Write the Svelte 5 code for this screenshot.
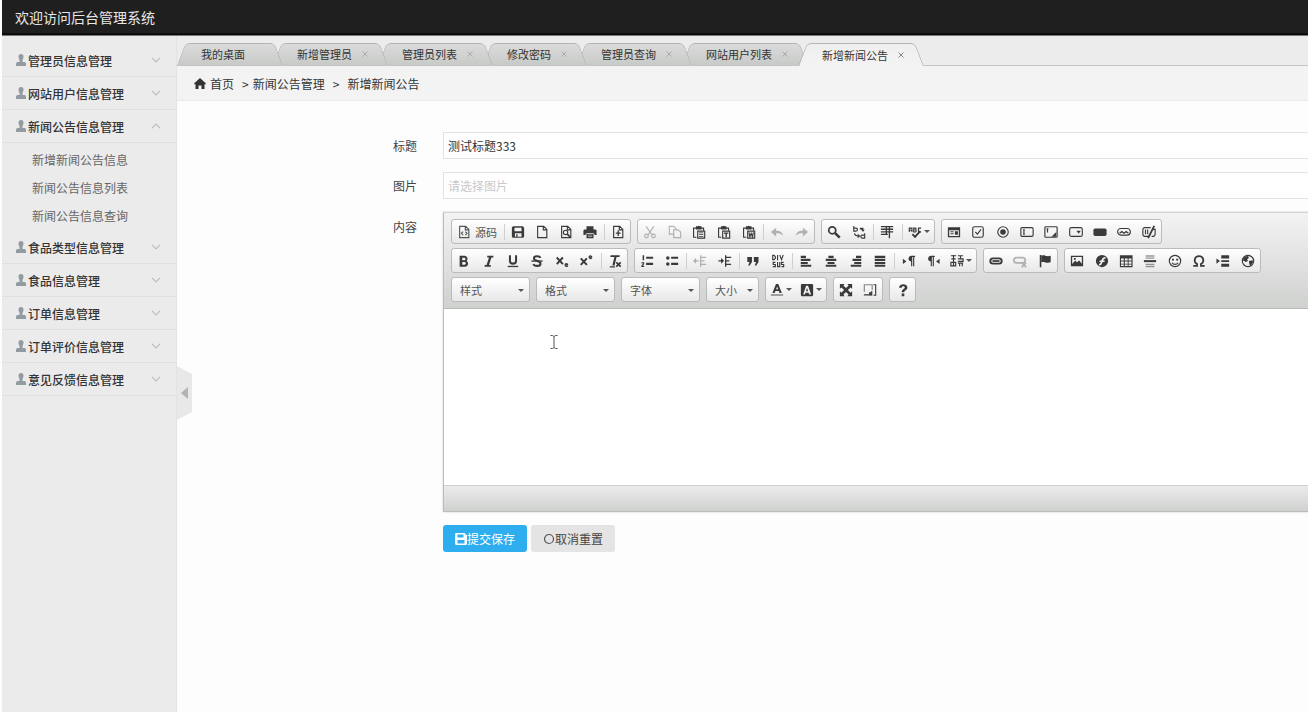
<script lang="ts">
  let menus = $state([
    { name: '管理员信息管理', open: false, items: [] as string[] },
    { name: '网站用户信息管理', open: false, items: [] as string[] },
    { name: '新闻公告信息管理', open: true, items: ['新增新闻公告信息', '新闻公告信息列表', '新闻公告信息查询'] },
    { name: '食品类型信息管理', open: false, items: [] as string[] },
    { name: '食品信息管理', open: false, items: [] as string[] },
    { name: '订单信息管理', open: false, items: [] as string[] },
    { name: '订单评价信息管理', open: false, items: [] as string[] },
    { name: '意见反馈信息管理', open: false, items: [] as string[] }
  ]);

  const tabs = ['我的桌面', '新增管理员', '管理员列表', '修改密码', '管理员查询', '网站用户列表', '新增新闻公告'];
  let active = $state(6);
  let title = $state('测试标题333');
  let picture = $state('');
  let content = $state('');

  const page = '<path class="l" d="M3 1.5h7l3.5 3.5v9.5H3zM9.5 1.5v4h4"/>';
  const clip = '<path class="l" stroke-width="1.6" d="M5 14H1.8V3.5h11.4v3"/><path d="M4.5 1.5h2a1.4 1.4 0 0 1 2.400 0h2v3.500h-6.400z"/><path class="l" d="M6.500 7h8v8h-8z"/>';
  const pilcrow = '<path d="M11 2h4v1.500h-1V14h-1.300V3.500h-1V14h-1.300V8.500a3.200 3.200 0 0 1 .6-6.500z"/>';

  const icons: Record<string, string> = {
    源码: page + '<path class="l" d="M7 7.500 5 9.500l2 2M9.500 7.500l2 2-2 2"/>',
    保存: '<path fill-rule="evenodd" d="M2.500 1.500h11l1.500 1.500v10.500l-1 1h-12l-1-1v-11zM4 3v4h8V3zM4.500 9.500v4H6v-3h1.500v3H12v-4z"/>',
    新建: page,
    预览: page + '<circle class="l" cx="7.500" cy="8.500" r="2.500"/><path class="l" stroke-width="2" d="m9.500 10.500 3.500 3.500"/>',
    打印: '<path fill-rule="evenodd" d="M4 1.500h8V5H4zM1.500 5h13l1 1v5.500H13V10H3v1.500H.5V6zM4 9h8v6H4zM5.500 11v.8h5V11zM5.500 13v.8h5V13z"/>',
    模板: page + '<path d="M7.500 6h1.500v2.500h2V10H9v2.500H7.500V10h-2V8.500h2z"/>',
    剪切: '<path class="l" stroke-width="1.700" d="m3.500 1.500 7 10M12.500 1.500l-7 10"/><circle class="l" cx="4" cy="12.500" r="2"/><circle class="l" cx="12" cy="12.500" r="2"/>',
    复制: '<path class="l" d="M1.500 1.500h5L9 4v6.500H1.500z"/><path fill="#f4f4f4" stroke="currentColor" stroke-width="1.300" d="M6.500 5.500h5L14.500 8v6.500h-8z"/>',
    粘贴: clip + '<path d="M8 8.500h5v1H8zM8 10.500h5v1H8zM8 12.500h5v1H8z"/>',
    粘贴为文本: clip + '<path d="M8 8.500h5V10h-1.700v4H9.700v-4H8z"/>',
    从Word粘贴: clip + '<path class="l" d="m8 8.500 1 5 1.500-4 1.500 4 1-5"/>',
    撤销: '<path d="M7 3v3.500c5 0 7.500 2 8 6-2-2.500-4-3-8-3V13L1 8z"/>',
    重做: '<path d="M9 3v3.500c-5 0-7.500 2-8 6 2-2.500 4-3 8-3V13l6-5z"/>',
    查找: '<circle class="l" stroke-width="2" cx="6" cy="6" r="4"/><path class="l" stroke-width="3" d="m9 9 5.500 5.500"/>',
    替换: '<path class="l" stroke-width="1.600" d="M2 1v6h2.500a1.500 1.500 0 0 0 0-3.500H2M14.500 9.500V15h-2.700a1.600 1.600 0 0 1 0-3.500h2.700M3 9.500c0 2 1.500 3 4.500 3"/><path d="m6.500 10 3 2.500-3 2.500zM9 3h4v2h1.500L12.500 8l-2-3H9z"/>',
    全选: '<path d="M1 1h14v1.600H1zM1 4h14v1.600H1zM1 7h14v1.600H1zM1 10h8v1.500H1zM10 1h1.500v14H10zM6.500 2H8v9H6.500z"/>',
    拼写检查: '<path class="l" d="M1.500 8V3.500h3V8m-3-2h3M6.500 3.500V8h2a1.200 1.200 0 0 0 0-2.300 1.200 1.200 0 0 0 0-2.200zM15 3.500h-3V8h3"/><path class="l" stroke-width="2.200" d="m5 10.500 3 3L14 7"/>',
    表单: '<path fill-rule="evenodd" d="M1 2.500h14v11.500H1zM2.500 6v6.500h11V6zM4 7h3.500v1.200H4zM4 9.500h3.500v1.200H4zM9 7h3.500v4H9z"/>',
    复选框: '<rect class="l" x="2" y="2" width="12" height="12" rx="2"/><path class="l" stroke-width="1.800" d="m5 8 2.300 2.500L11.500 5"/>',
    单选框: '<circle class="l" cx="8" cy="8" r="6"/><circle cx="8" cy="8" r="3.200"/>',
    单行文本: '<rect class="l" x="1" y="3" width="14" height="10" rx="1.500"/><path class="l" d="M4.500 5.500v5M3.500 5.500h2M3.500 10.500h2"/>',
    多行文本: '<rect class="l" x="1" y="2" width="14" height="12" rx="1"/><path class="l" d="M4 4.500v4M3 4.500h2"/><path d="M14 8v5.500H8.500z"/>',
    列表菜单: '<rect class="l" x=".8" y="3" width="14.400" height="10" rx="2"/><path d="M8.500 6.500h5l-2.500 3.500z"/>',
    按钮: '<rect x=".5" y="4" width="15" height="8.500" rx="2"/>',
    图像按钮: '<rect class="l" x=".8" y="4" width="14.400" height="7.500" rx="3.500"/><path class="l" d="m3 9.500 2.500-2 2.500 2 2.500-2 2.500 2"/>',
    隐藏域: '<path class="l" d="M8 13H2.500L1 11.500v-7L2.500 3H10M12 5h3v6l-1.500 2H11M4 5v5.500M6.500 5v5.500"/><path class="l" stroke-width="2" d="M14 1 7 15"/>',
    加粗: '<path fill-rule="evenodd" d="M3 2h6a3.500 3.500 0 0 1 2 6 3.500 3.500 0 0 1-1.500 6.500H3zm3 2.200V7h2.300a1.400 1.400 0 0 0 0-2.800zM6 9v3.200h2.500a1.600 1.600 0 0 0 0-3.200z"/>',
    倾斜: '<path d="M6 2h7v2h-2.200L8 12.500h2v2H3v-2h2.200L8 4H6z"/>',
    下划线: '<path class="l" stroke-width="2.300" d="M4.500 1.500V8c0 4 7 4 7 0V1.500"/><path d="M2 13.500h12V15H2z"/>',
    删除线: '<path class="l" stroke-width="2.300" d="M12 4.500C11 2 4.500 2 4.500 5c0 3.500 7.500 2 7.500 6 0 3.500-7 3.200-8.200.5"/><path d="M1.500 7.300h13v1.500h-13z"/>',
    下标: '<path class="l" stroke-width="2.200" d="m2 4 7 7.500M9 4l-7 7.500"/><path class="l" d="M11.500 12.500h3c0-2-3-2-3 0s2 2.200 3 1.200"/>',
    上标: '<path class="l" stroke-width="2.200" d="m2 5 7 7.500M9 5l-7 7.500"/><path class="l" d="M11.500 3.500h3c0-2-3-2-3 0s2 2.200 3 1.200"/>',
    清除格式: '<path d="M3 1.500h10.500l-.4 2H9.800L7.500 13H5l2.300-9.500H2.600zM2 14h6v1.300H2z"/><path class="l" stroke-width="2" d="m9.500 9.500 5 5M14.500 9.500l-5 5"/>',
    编号列表: '<path d="M7 3h8v2.500H7zM7 10h8v2.500H7zM3 1.500h1.700V7H3zM1.500 9.500h3.300v2.200L3 13.500h1.800v1.300H1.500v-1.500l1.700-2v-.6H1.500z"/>',
    项目列表: '<circle cx="3.200" cy="4.500" r="2"/><circle cx="3.200" cy="11.500" r="2"/><path d="M7 3h8v2.500H7zM7 10h8v2.500H7z"/>',
    减少缩进: '<path d="M8 1.500h1.500v13H8zM9 3h6v1.500H9zM9 7h4v1.500H9zM9 11h6v1.500H9zM6.500 7v1.500h-3V11L0 7.800 3.500 4.500V7z"/>',
    增加缩进: '<path d="M8 1.500h1.500v13H8zM9 3h6v1.500H9zM9 7h4v1.500H9zM9 11h6v1.500H9zM.5 7v1.500h3V11L7 7.800 3.500 4.500V7z"/>',
    块引用: '<path d="M1.500 3.500h5.300V9L4.300 13H2.500L4 9H1.500zM9 3.500h5.300V9l-2.500 4H10l1.500-4H9z"/>',
    DIV容器: '<path class="l" stroke-width="1.500" d="M2 1.500v5h1.500L5 5V3L3.500 1.500zM7.500 1v6M10 1l2 5.500L14 1M5 9.500H2.500V12H5v2.500H2M7.500 9v5.500H10V9M14.500 9.500H12V12h2.500v2.500H12"/>',
    左对齐: '<path d="M2 2h6v2.500H2zM2 5.500h11V8H2zM2 9h8v2.300H2zM2 12.300h12v2.200H2z"/>',
    居中: '<path d="M5 2h6v2.500H5zM2 5.500h12V8H2zM4 9h8v2.300H4zM2 12.300h12v2.200H2z"/>',
    右对齐: '<path d="M8 2h6v2.500H8zM4 5.500h10V8H4zM6 9h8v2.300H6zM2 12.300h12v2.200H2z"/>',
    两端对齐: '<path d="M2 2h12v2.500H2zM2 5.500h12V8H2zM2 9h12v2.300H2zM2 12.300h12v2.200H2z"/>',
    从左到右: pilcrow + '<path d="m1 5.500 4 3-4 3z"/>',
    从右到左: '<g transform="translate(-5)">' + pilcrow + '</g><path d="m15.500 5.500-4 3 4 3z"/>',
    语言: '<path class="l" stroke-width="1.500" d="M1 2h6M4 1v13M1.500 5.500h5M1 9.500h5.500v4H1zM9 2h6M12 2v3.500M9 5.500h6v3H9M9 10.500h6M11 10v4M14 10v4"/>',
    链接: '<rect class="l" stroke-width="2.200" x="1.500" y="5" width="13" height="6" rx="3"/><path d="M4 7h8v2H4z"/>',
    取消链接: '<rect class="l" stroke-width="2" x="1" y="4" width="13" height="6" rx="3"/><path class="l" stroke-width="2" d="m10 10 5 5M15 10l-5 5"/>',
    锚点: '<path d="M2 1h1.800v14H2zM4 2c3-1.500 5 1.500 10.500 0v7.500C9 11 7 8 4 9.500z"/>',
    图像: '<path fill-rule="evenodd" d="M1 2h14v12H1zM2.500 3.500v8l3.500-4 2 2 2.500-2 3 3.500v-7.500zM4.500 4.500h2v2h-2z"/>',
    Flash: '<path fill-rule="evenodd" d="M8 1a7 7 0 1 1 0 14A7 7 0 0 1 8 1zm4 2.500c-3 0-4 1.500-4.700 4H5.500l-.6 1.500h1.900c-.6 1.500-1 2-2.300 2v2c3 0 3.500-2 4.200-4h2l.5-1.500H9.300c.5-1.400 1.200-2 2.700-2z"/>',
    表格: '<path fill-rule="evenodd" d="M1 1.500h14.500v13.500H1zM2.300 5v2.500h3.200V5zM6.700 5v2.500h3.200V5zM11 5v2.500h3.200V5zM2.300 8.600V11h3.200V8.600zM6.700 8.600V11h3.200V8.600zM11 8.600V11h3.200V8.600zM2.300 12v1.700h3.200V12zM6.700 12v1.700h3.200V12zM11 12v1.700h3.200V12z"/>',
    水平线: '<path d="M1 7h14v2.300H1z"/><path opacity=".5" d="M3 1.500h10V3H3zM3 4h10v1.500H3zM3 11h10v1.500H3zM3 13.500h10V15H3z"/>',
    表情: '<circle class="l" cx="8" cy="8" r="6.500"/><path d="M4.500 5.500h2.300v2H4.500zM9.300 5.500h2.300v2H9.300z"/><path class="l" d="M4.500 10c1.500 2.500 5.500 2.500 7 0"/>',
    特殊符号: '<path class="l" stroke-width="2" d="M1.500 13.500h4.300v-2C1 8.500 3 2.500 8 2.500s7 6 2.200 9v2h4.300"/>',
    分页符: '<path d="M6 1.500h9v3.500H6zM6 7.200h9V9H6zM6 11h9v3.500H6zM.5 5 4.500 8l-4 3z"/>',
    IFrame: '<circle class="l" cx="8" cy="8" r="6.500"/><path d="M3.500 4 8 2l1 2.500L7 6l1 2-2.500 1L2 7zM9 8l4-1 1 2-3.500 5-1-2.500z"/>',
    文本颜色: '<path fill-rule="evenodd" d="M6.800 1h2.700l4 10.500h-2.600L10 9.200H6.200l-.9 2.300H2.800zm1.300 3L7 7.200h2.300z"/><path opacity=".5" d="M1 12.700h14v2H1z"/>',
    背景颜色: '<path fill-rule="evenodd" d="M2 1h12l1 1v12l-1 1H2l-1-1V2zm5 2L3.600 13h2L6.300 11h3.500l.7 2h2.200L9.200 3zm1 2.500L9.200 9.300H6.900z"/>',
    全屏: '<path d="M1 1h5.500L5 2.800l3 3 3-3L9.500 1H15v5.500L13.200 5l-3 3 3 3L15 9.500V15H9.500l1.500-1.800-3-3-3 3L6.500 15H1V9.500L2.800 11l3-3-3-3L1 6.500z"/>',
    显示区块: '<path class="l" opacity=".6" d="M1.500 10V2h9v6"/><path class="l" stroke-width="1.500" d="M1 13.500h9V9M12 2h2.500v12H12"/><path d="M7 10.500h3V14H7z"/>',
    关于: '<path d="M3.500 5.500C3.500-.3 13 .3 13 5c0 3-3.600 3.200-3.600 5.500H6.600c0-3.500 3.400-3.700 3.400-5.300 0-2-3.500-2-3.500.3zM6.500 12h3v3h-3z"/>'
  };

  type Group = { w: number; names: string[]; combo?: boolean };
  const rows: Group[][] = [
    [
      { w: 180, names: ['源码', '|', '保存', '新建', '预览', '打印', '|', '模板'] },
      { w: 178, names: ['剪切', '复制', '粘贴', '粘贴为文本', '从Word粘贴', '|', '撤销', '重做'] },
      { w: 114, names: ['查找', '替换', '|', '全选', '|', '拼写检查'] },
      { w: 221, names: ['表单', '复选框', '单选框', '单行文本', '多行文本', '列表菜单', '按钮', '图像按钮', '隐藏域'] }
    ],
    [
      { w: 177, names: ['加粗', '倾斜', '下划线', '删除线', '下标', '上标', '|', '清除格式'] },
      { w: 343, names: ['编号列表', '项目列表', '|', '减少缩进', '增加缩进', '|', '块引用', 'DIV容器', '|', '左对齐', '居中', '右对齐', '两端对齐', '|', '从左到右', '从右到左', '语言'] },
      { w: 75, names: ['链接', '取消链接', '锚点'] },
      { w: 197, names: ['图像', 'Flash', '表格', '水平线', '表情', '特殊符号', '分页符', 'IFrame'] }
    ],
    [
      { w: 79, names: ['样式'], combo: true },
      { w: 79, names: ['格式'], combo: true },
      { w: 79, names: ['字体'], combo: true },
      { w: 53, names: ['大小'], combo: true },
      { w: 62, names: ['文本颜色', '背景颜色'] },
      { w: 50, names: ['全屏', '显示区块'] },
      { w: 27, names: ['关于'] }
    ]
  ];
  const faded = ['剪切', '复制', '撤销', '重做', '减少缩进', '取消链接'];
  const withCaret = ['拼写检查', '语言', '文本颜色', '背景颜色'];
</script>

<div class="app">
  <header>欢迎访问后台管理系统</header>
  <div class="body">
    <aside>
      <nav>
        {#each menus as menu}
          <button class="menu" aria-expanded={menu.open} onclick={() => (menu.open = !menu.open)}>
            <svg class="user" viewBox="0 0 10 12"><path d="M5 0a2.500 2.500 0 0 1 2.500 2.500C7.500 4.500 6.800 5 6.500 6v2H9l1 1.500V12H0V9.500L1 8h2.500V6C3.200 5 2.500 4.500 2.500 2.500A2.500 2.500 0 0 1 5 0z" /></svg>
            <span>{menu.name}</span>
            <svg class="chev" class:up={menu.open} viewBox="0 0 10 6"><path d="m1 .8 4 4 4-4" /></svg>
          </button>
          {#if menu.open && menu.items.length}
            <ul>
              {#each menu.items as item}<li><a href="#list">{item}</a></li>{/each}
            </ul>
          {/if}
        {/each}
      </nav>
      <button class="fold" aria-label="收起菜单">
        <svg viewBox="0 0 15 54"><path class="plate" d="M0 0 15 8v38L0 54z" /><path class="arrow" d="M11 21v12l-7-6z" /></svg>
      </button>
    </aside>

    <main>
      <div class="tabs">
        {#each tabs as tab, i}
          <div class="tab" class:active={active === i} class:home={i === 0} style:z-index={active === i ? 20 : 10 - i}>
            <button class="name" onclick={() => (active = i)}>{tab}</button>
            {#if i > 0}
              <button class="close" aria-label="关闭"><svg viewBox="0 0 6 6"><path d="m.5.5 5 5M5.500.5l-5 5" /></svg></button>
            {/if}
          </div>
        {/each}
      </div>
      <div class="crumbs">
        <svg viewBox="0 0 12 11"><path d="M6 0 12 5.500l-.8 1L10.500 6v5h-3V7.500h-3V11h-3V6l-.7.5-.8-1z" /></svg>
        <a href="#home">首页</a><i>&gt;</i><a href="#news">新闻公告管理</a><i class="last">&gt;</i><span>新增新闻公告</span>
      </div>

      <form onsubmit={(e) => e.preventDefault()}>
        <label for="title">标题</label>
        <input id="title" type="text" bind:value={title} spellcheck="false" />
        <label for="picture">图片</label>
        <input id="picture" type="text" placeholder="请选择图片" bind:value={picture} />
        <label class="top" for="content">内容</label>
        <div class="editor">
          <div class="toolbar">
            {#each rows as row}
              <div class="row">
                {#each row as group}
                  <div class="group" style:width="{group.w}px">
                    {#if group.combo}
                      <select aria-label={group.names[0]}><option>{group.names[0]}</option></select>
                      <span class="caret end"></span>
                    {:else}
                      {#each group.names as name}
                        {#if name === '|'}
                          <span class="sep"></span>
                        {:else}
                          <button type="button" class="tool" class:faded={faded.includes(name)} class:source={name === '源码'} class:wide={withCaret.includes(name)} aria-label={name}>
                            <svg viewBox="0 0 16 16">{@html icons[name]}</svg>
                            {#if name === '源码'}<span>源码</span>{/if}
                            {#if withCaret.includes(name)}<span class="caret"></span>{/if}
                          </button>
                        {/if}
                      {/each}
                    {/if}
                  </div>
                {/each}
              </div>
            {/each}
          </div>
          <div class="area">
            <textarea id="content" bind:value={content}></textarea>
            <svg class="ibeam" viewBox="0 0 8 16"><path d="M.5 1.500h2l1.500 1 1.500-1h2M.5 14.500h2l1.500-1 1.500 1h2M4 2.500v11" /></svg>
          </div>
          <div class="foot"></div>
        </div>
        <div class="actions">
          <button class="btn primary" type="submit">
            <svg viewBox="0 0 12 12"><path fill="#fff" fill-rule="evenodd" d="M1 0h8.500L12 2.500V11l-1 1H1l-1-1V1zm1.500 1.500v3h6v-3zM2.500 7v3.500h7V7z" /></svg>提交保存
          </button>
          <button class="btn" type="button"><svg viewBox="0 0 12 12"><circle cx="6" cy="6" r="4.500" fill="none" stroke="#555" stroke-width="1.200" /></svg>取消重置</button>
        </div>
      </form>
    </main>
  </div>
</div>

<style>
  :global(body) { background: #fdfdfd; }
  .app {
    min-height: 100vh;
    padding-left: 2px;
    box-sizing: border-box;
    display: flex;
    flex-direction: column;
    overflow: hidden;
    font-family: "Noto Sans CJK SC", sans-serif;
    font-size: 12px;
    color: #333;
  }
  button, input, select, textarea {
    font: inherit;
    color: inherit;
    margin: 0;
    padding: 0;
    border: 0;
    background: none;
    box-sizing: border-box;
    outline: none;
  }
  a { color: inherit; text-decoration: none; }
  svg { display: block; flex: none; }

  header {
    height: 36px;
    box-sizing: border-box;
    padding-left: 13px;
    background: #1f1f1f;
    border-bottom: 1px solid #777;
    box-shadow: inset 0 -2px #0c0c0c;
    color: #e8e8e8;
    font-size: 14px;
    line-height: 35px;
  }
  .body { flex: 1; display: flex; }

  aside {
    position: relative;
    flex: 0 0 175px;
    box-sizing: border-box;
    background: #ebebeb;
    border-right: 1px solid #e3e3e3;
    padding-top: 8px;
  }
  .menu {
    display: flex;
    align-items: center;
    width: 100%;
    height: 33px;
    padding: 0 15px 0 14px;
    border-bottom: 1px solid #e0e0e0;
    text-align: left;
    font-weight: 500;
  }
  .menu span { flex: 1; margin-left: 2px; }
  .user { width: 10px; height: 12px; fill: #929ba2; }
  .chev { width: 10px; height: 6px; fill: none; stroke: #bdbdbd; stroke-width: 1.2; }
  .up { transform: rotate(180deg); }
  ul { list-style: none; margin: 0; padding: 3px 0 1px; }
  li { height: 28px; line-height: 28px; padding-left: 30px; color: #666; }
  .fold { position: absolute; left: 175px; top: 330px; z-index: 30; }
  .fold svg { width: 15px; height: 54px; }
  .plate { fill: #e8e8e8; }
  .arrow { fill: #b2b2b2; }

  main { flex: 1; min-width: 0; background: #fdfdfd; }
  .tabs {
    display: flex;
    height: 30px;
    box-sizing: border-box;
    padding-top: 7px;
    background: #ececec;
    border-bottom: 1px solid #c4c4c4;
  }
  .tab {
    position: relative;
    display: flex;
    align-items: center;
    height: 22px;
    margin-right: -10px;
    padding: 0 20px 0 24px;
    font-size: 11px;
    flex: none;
    --fill: linear-gradient(#dadbda, #c8cac8);
  }
  .tab.home { padding-right: 38px; }
  .tab.active { height: 23px; --fill: linear-gradient(#eeefee, #f3f3f3); }
  .tab::before, .tab::after {
    content: "";
    position: absolute;
    top: 0;
    bottom: 0;
    box-sizing: border-box;
    background: var(--fill);
    border-top: 1px solid #b4b4b4;
    transform-origin: bottom;
  }
  .tab::before { left: 0; right: 49%; border-left: 1px solid #b4b4b4; border-radius: 5px 0 0 0; transform: skewX(-21deg); }
  .tab::after { right: 0; left: 49%; border-right: 1px solid #b4b4b4; border-radius: 0 5px 0 0; transform: skewX(21deg); }
  .name, .close { position: relative; z-index: 1; }
  .name { white-space: nowrap; }
  .close { padding-left: 10px; }
  .close svg { width: 6px; height: 6px; stroke: #aaa; fill: none; }
  .active .close svg { stroke: #888; }

  .crumbs {
    display: flex;
    align-items: center;
    height: 35px;
    box-sizing: border-box;
    padding-left: 17px;
    background: #f3f3f3;
    border-bottom: 1px solid #eaeaea;
  }
  .crumbs svg { width: 12px; height: 11px; fill: #333; margin-right: 4px; }
  .crumbs i { font-style: normal; margin: 0 4px 0 8px; }
  .crumbs .last { margin-right: 8px; }

  form {
    display: grid;
    grid-template-columns: 240px minmax(0, 1fr);
    column-gap: 26px;
    row-gap: 13px;
    align-items: center;
    padding-top: 31px;
  }
  label { text-align: right; color: #444; }
  label.top { align-self: start; padding-top: 6px; }
  input {
    width: 100%;
    height: 27px;
    padding-left: 4px;
    border: 1px solid #e2e2e2;
    border-right: 0;
    background: #fff;
  }
  input::placeholder { color: #c9c9c9; opacity: 1; }

  .editor { border: 1px solid #bcbcbc; border-top-color: #d2d2d2; border-right: 0; box-shadow: 0 0 2px #ccc; }
  .toolbar {
    display: flex;
    flex-direction: column;
    gap: 4px;
    height: 96px;
    box-sizing: border-box;
    padding: 6px 7px;
    background: linear-gradient(#f3f3f3, #cfd1cf);
    border-bottom: 1px solid #b9bbb9;
  }
  .row { display: flex; gap: 6px; }
  .group {
    position: relative;
    display: flex;
    flex: none;
    height: 25px;
    box-sizing: border-box;
    border: 1px solid #bbb;
    border-radius: 3px;
    background: linear-gradient(#fff, #e8e8e8);
  }
  .tool {
    flex: 1 1 24px;
    min-width: 0;
    display: flex;
    align-items: center;
    justify-content: center;
    color: #3a3a3a;
  }
  .tool svg { width: 14px; height: 14px; fill: currentColor; }
  .tool :global(.l) { fill: none; stroke: currentColor; stroke-width: 1.3; }
  .tool :global(.l[stroke-width="2"]) { stroke-width: 2; }
  .tool :global(.l[stroke-width="2.200"]) { stroke-width: 2.2; }
  .tool :global(.l[stroke-width="2.300"]) { stroke-width: 2.3; }
  .tool :global(.l[stroke-width="3"]) { stroke-width: 3; }
  .faded { opacity: 0.35; }
  .source { flex-basis: 50px; gap: 4px; font-size: 11px; color: #555; }
  .wide { flex-basis: 30px; gap: 2px; }
  .sep { flex: 0 0 1px; height: 16px; margin: 4px 1px 0 2px; background: #cfcfcf; }
  .caret { width: 0; height: 0; border: 3px solid transparent; border-top-color: #555; border-bottom: 0; }
  .end { position: absolute; right: 5px; top: 11px; pointer-events: none; }
  select { appearance: none; width: 100%; padding-left: 8px; font-size: 11px; color: #555; }

  .area { position: relative; display: flex; }
  textarea { width: 100%; height: 176px; padding: 12px; resize: none; background: #fff; }
  .ibeam { position: absolute; left: 106px; top: 25px; width: 8px; height: 16px; fill: none; stroke: #555; }
  .foot { height: 26px; box-sizing: border-box; border-top: 1px solid #d0d0d0; background: linear-gradient(#ebebeb, #cfd1cf); }

  .actions { grid-column: 2; display: flex; gap: 4px; }
  .btn {
    display: flex;
    align-items: center;
    justify-content: center;
    width: 84px;
    height: 27px;
    border-radius: 3px;
    background: #e4e4e4;
    color: #444;
  }
  .btn svg { width: 12px; height: 12px; }
  .primary { background: #2eaeee; color: #fff; }
</style>
